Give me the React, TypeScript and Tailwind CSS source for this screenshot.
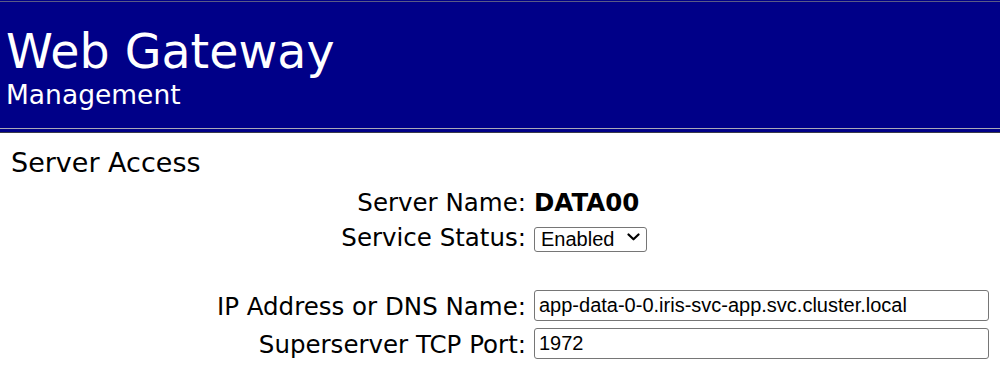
import React from "react";

export default function App() {
  return (
    <div className="w-[1000px] h-[371px] bg-white overflow-hidden text-black font-['DejaVu_Sans',Verdana,sans-serif]">
      {/* Header */}
      <div className="bg-[#000088]">
        <div className="h-px bg-[#000088]" />
        <div className="h-px bg-[#5a5a86]" />
        <div className="h-[126px] pl-[6px] text-white">
          <div className="pt-[26px] text-[47.5px] leading-[47px]">Web Gateway</div>
          <div className="mt-[7px] text-[26.5px] leading-[26px]">Management</div>
        </div>
        <div className="h-px bg-[#a9a9b8]" />
        <div className="h-[3px] bg-[#000088]" />
        <div className="h-px bg-[#3a3a4a]" />
      </div>

      {/* Body */}
      <div className="pl-[11px] pt-[17px] text-[27px] leading-[26px]">Server Access</div>

      <div className="mt-[13px] grid grid-cols-[526px_455px] gap-x-[8px] text-[24.5px] leading-[28px]">
        <div className="text-right h-[35px]">Server Name:</div>
        <div className="h-[35px] font-bold">DATA00</div>

        <div className="text-right h-[35px]">Service Status:</div>
        <div className="h-[35px]">
          <div className="relative w-[113px] h-[25px]">
            <select
              defaultValue="Enabled"
              className="appearance-none w-[113px] h-[25px] border border-[#767676] rounded-[3px] bg-white pl-[6px] pr-[24px] py-0 text-[20px] leading-[22px] text-black font-['Liberation_Sans',Arial,sans-serif] outline-none"
            >
              <option>Enabled</option>
              <option>Disabled</option>
            </select>
            <svg
              className="pointer-events-none absolute right-[7px] top-[9px]"
              width="13"
              height="8"
              viewBox="0 0 13 8"
              fill="none"
            >
              <path d="M1.5 1.5 L6.5 6.3 L11.5 1.5" stroke="#000" strokeWidth="2.2" strokeLinecap="round" strokeLinejoin="round" />
            </svg>
          </div>
        </div>

        <div className="col-span-2 h-[31px]" />

        <div className="text-right h-[31px] flex items-center justify-end pt-[2px]">IP Address or DNS Name:</div>
        <div className="h-[31px]">
          <input
            defaultValue="app-data-0-0.iris-svc-app.svc.cluster.local"
            className="w-[455px] h-[31px] border border-[#767676] rounded-[3px] px-[4px] text-[20px] text-black font-['Liberation_Sans',Arial,sans-serif] outline-none"
          />
        </div>

        <div className="col-span-2 h-[7px]" />

        <div className="text-right h-[31px] flex items-center justify-end pt-[2px]">Superserver TCP Port:</div>
        <div className="h-[31px]">
          <input
            defaultValue="1972"
            className="w-[455px] h-[31px] border border-[#767676] rounded-[3px] px-[4px] text-[20px] text-black font-['Liberation_Sans',Arial,sans-serif] outline-none"
          />
        </div>
      </div>
    </div>
  );
}
